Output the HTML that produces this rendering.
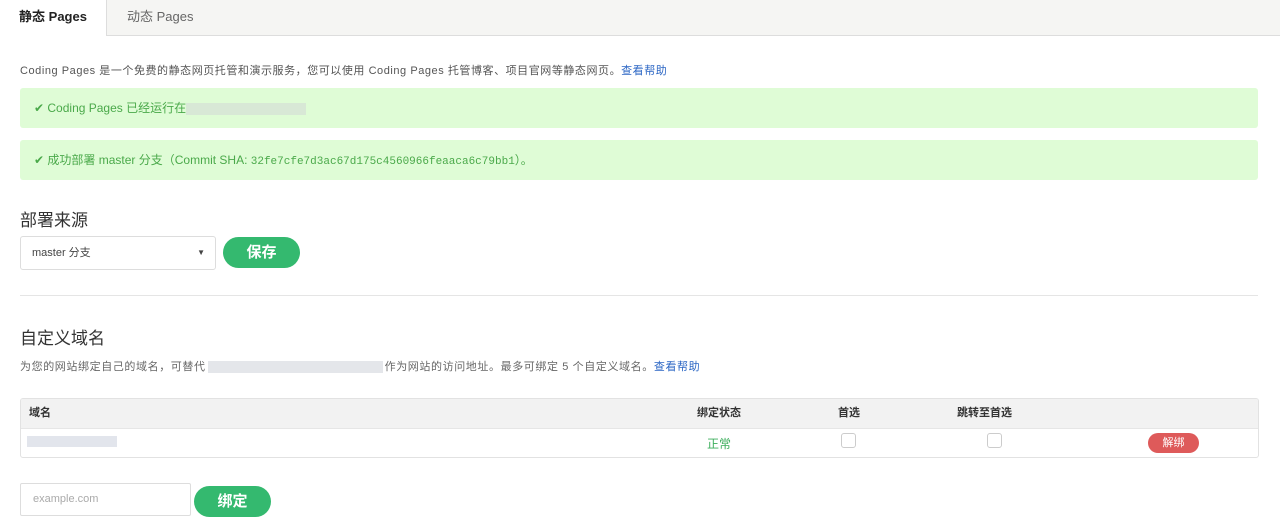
<!DOCTYPE html>
<html><head><meta charset="utf-8"><style>
body{margin:0;width:1280px;height:527px;background:#fff;font-family:"Liberation Sans","Noto Sans CJK SC",sans-serif;color:#333;position:relative;overflow:hidden}
.a{position:absolute}
.tabbar{left:0;top:0;width:1280px;height:35px;background:#f5f5f3;border-bottom:1px solid #ddd}
.tab1{left:0;top:0;width:106px;height:36px;background:#fff;border-right:1px solid #ddd;font-size:13px;font-weight:bold;line-height:34px;text-align:center;color:#222}
.tab2{left:127px;top:0;font-size:13px;line-height:34px;color:#666}
.alert{left:20px;width:1238px;height:40px;background:#dffcd6;border-radius:3px;color:#4aa94a;font-size:12px;line-height:40px}
.blur{display:inline-block;background:#d8e8d6;height:12px;vertical-align:middle}
.btn{background:#34b96f;color:#fff;border-radius:16px;font-weight:bold;font-size:15px;text-align:center}
a{color:#2b66c4;text-decoration:none}
.cb{width:13px;height:13px;border:1px solid #ccc;border-radius:3px;background:#fff}
</style></head><body>
<div class="a tabbar"></div>
<div class="a tab1">静态 Pages</div>
<div class="a tab2">动态 Pages</div>
<div class="a" style="left:20px;top:62px;font-size:11px;color:#555;letter-spacing:0.55px">Coding Pages 是一个免费的静态网页托管和演示服务，您可以使用 Coding Pages 托管博客、项目官网等静态网页。<a>查看帮助</a></div>
<div class="a alert" style="top:88px;padding-left:14px;width:1224px">✔ Coding Pages 已经运行在<span class="blur" style="width:120px"></span></div>
<div class="a alert" style="top:140px;padding-left:14px;width:1224px">✔ 成功部署 master 分支（Commit SHA: <span style="font-family:'Liberation Mono',monospace;font-size:11px">32fe7cfe7d3ac67d175c4560966feaaca6c79bb1</span>）。</div>
<div class="a" style="left:20px;top:206px;font-size:17px;color:#333">部署来源</div>
<div class="a" style="left:20px;top:236px;width:194px;height:32px;border:1px solid #ddd;border-radius:3px;font-size:11px;line-height:32px;text-indent:11px;color:#444">master 分支<span style="position:absolute;right:10px;font-size:8px">▼</span></div>
<div class="a btn" style="left:223px;top:237px;width:77px;height:31px;line-height:31px">保存</div>
<div class="a" style="left:20px;top:295px;width:1238px;height:1px;background:#e5e5e5"></div>
<div class="a" style="left:20px;top:324px;font-size:17px;color:#333">自定义域名</div>
<div class="a" style="left:20px;top:358px;font-size:11px;color:#666;letter-spacing:0.6px">为您的网站绑定自己的域名，可替代<span class="blur" style="width:175px;background:#e4e6ea;margin:0 2px"></span>作为网站的访问地址。最多可绑定 5 个自定义域名。<a>查看帮助</a></div>
<div class="a" style="left:20px;top:398px;width:1237px;height:58px;border:1px solid #e2e2e2;border-radius:3px;overflow:hidden">
<div style="height:29px;background:#f2f2f2;border-bottom:1px solid #e6e6e6;font-size:11px;font-weight:bold;line-height:29px;position:relative">
<span class="a" style="left:8px">域名</span><span class="a" style="left:676px">绑定状态</span><span class="a" style="left:817px">首选</span><span class="a" style="left:936px">跳转至首选</span></div>
<div class="a" style="left:6px;top:37px;width:90px;height:11px;background:#e2e5ec"></div>
<div class="a" style="left:686px;top:36px;font-size:12px;color:#3cae5c">正常</div>
<div class="a cb" style="left:820px;top:34px"></div>
<div class="a cb" style="left:966px;top:34px"></div>
<div class="a" style="left:1127px;top:34px;width:51px;height:20px;background:#de5a5a;border-radius:10px;color:#fff;font-size:11px;line-height:20px;text-align:center">解绑</div>
</div>
<div class="a" style="left:20px;top:483px;width:169px;height:31px;border:1px solid #ddd;border-radius:2px;font-size:11px;line-height:31px;text-indent:12px;color:#aaa">example.com</div>
<div class="a btn" style="left:194px;top:486px;width:77px;height:31px;line-height:31px">绑定</div>
</body></html>
